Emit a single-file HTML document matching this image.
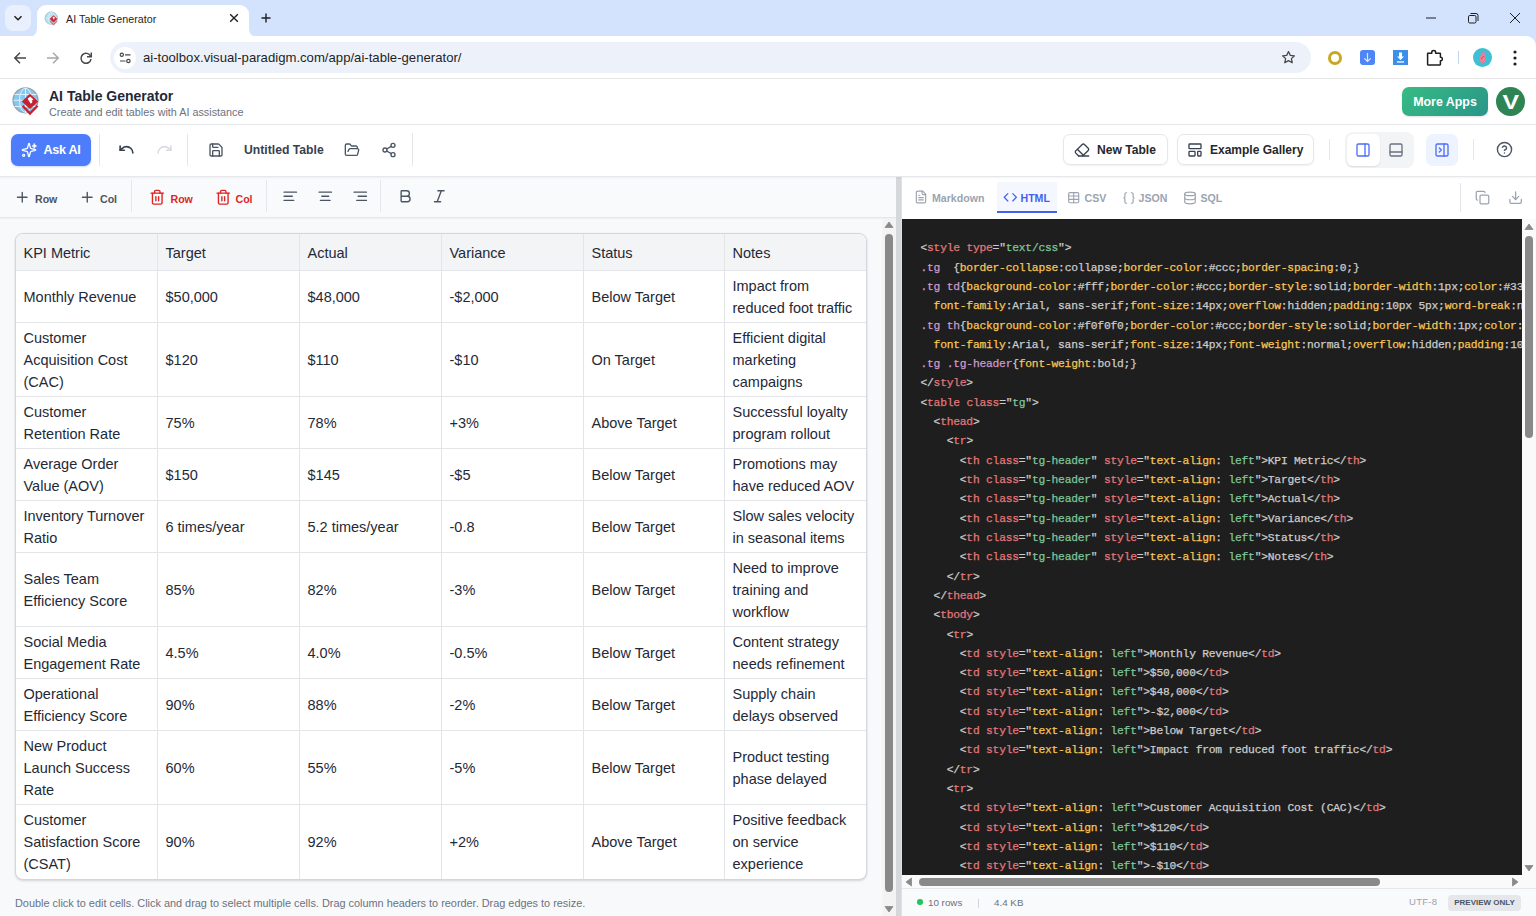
<!DOCTYPE html>
<html><head><meta charset="utf-8">
<style>
*{box-sizing:border-box;margin:0;padding:0}
html,body{width:1536px;height:916px;overflow:hidden;background:#fff;font-family:"Liberation Sans",sans-serif;color:#1f2937}
.abs{position:absolute;white-space:nowrap}
svg{display:block}
/* chrome */
#tabstrip{left:0;top:0;width:1536px;height:48px;background:#d3e3fd}
#addr{left:0;top:36px;width:1536px;height:42px;background:#fff;border-top-right-radius:10px}
#chromeline{left:0;top:78px;width:1536px;height:1.5px;background:#e6e6e6;box-shadow:0 0.5px 1px rgba(0,0,0,.04)}
/* app header */
#apphdr{left:0;top:79px;width:1536px;height:46px;background:#fff;border-bottom:1px solid #e5e7eb;box-shadow:0 1px 2px rgba(0,0,0,.05);z-index:2}
#toolbar{left:0;top:125px;width:1536px;height:52px;background:#fff;border-bottom:1px solid #e5e7eb;box-shadow:0 1px 2px rgba(0,0,0,.05);z-index:2}
#leftpane{left:0;top:177px;width:896px;height:739px;background:#f8f9fb}
#splitter{left:896px;top:177px;width:6px;height:739px;background:linear-gradient(90deg,#d6d7db 0,#d6d7db 4.5px,#e3e4e8 6px)}
#rightpane{left:902px;top:177px;width:634px;height:739px;background:#fff}
#code{left:902px;top:219px;width:620px;height:656px;background:#1e1e1e;overflow:hidden}

.tbt{top:16px;font-size:10.6px;font-weight:bold;line-height:13px}
#tbl{left:15px;top:56px;width:852px;height:647px;border:1px solid #d3d6dc;border-radius:8px;overflow:hidden;background:#fff;box-shadow:0 1px 3px rgba(0,0,0,.1),0 1px 2px rgba(0,0,0,.06)}
.tr{display:flex;border-bottom:1px solid #e3e5e9}
.th{background:#f3f4f6}
.td{border-right:1px solid #e3e5e9;display:flex;align-items:center;padding:0 0 0 7.5px;font-size:14.5px;line-height:22px;color:#1f2937;white-space:nowrap;flex:none}
.td span{position:relative;top:0.5px}
.last .td span{top:-0.3px}

.rtab{top:192px;font-size:10.6px;font-weight:bold;line-height:12px}
#code pre{font-family:"Liberation Mono",monospace;font-size:11.3px;letter-spacing:-0.23px;line-height:19.31px;color:#cccccc;padding:20.3px 0 0 18.5px;white-space:pre}
#code i{font-style:normal}
#code pre{-webkit-text-stroke:0.25px currentColor}
i.p{color:#cccccc} i.t,i.a{color:#e2777a} i.v{color:#7ec699} i.s{color:#cc99cd} i.r{color:#f8c555}
</style></head><body>

<div id="tabstrip" class="abs">
  <div class="abs" style="left:5px;top:5px;width:26px;height:26px;border-radius:8px;background:#e9effc"></div>
  <svg class="abs" style="left:13px;top:13px" width="10" height="10" viewBox="0 0 10 10"><path d="M1.5 3.2 L5 6.7 L8.5 3.2" fill="none" stroke="#1f1f1f" stroke-width="1.5"/></svg>
  <!-- active tab -->
  <div class="abs" style="left:37px;top:5px;width:212px;height:32px;background:#fff;border-radius:9px 9px 0 0"></div>
  <svg class="abs" style="left:28px;top:27px" width="10" height="10" viewBox="0 0 10 10"><path d="M0 10 Q9 10 9 1 L9 10 Z" fill="#fff"/><path d="M9 0 L10 0 L10 10 L9 10Z" fill="#fff"/></svg>
  <svg class="abs" style="left:248px;top:27px" width="10" height="10" viewBox="0 0 10 10"><path d="M10 10 Q1 10 1 1 L1 10 Z" fill="#fff"/><path d="M0 0 L1 0 L1 10 L0 10Z" fill="#fff"/></svg>
  <svg class="abs" style="left:40.5px;top:8.7px" width="20" height="20" viewBox="0 0 40 40">
    <circle cx="20.5" cy="18.3" r="12.4" fill="#b4e2f7" stroke="#9fb8c2" stroke-width="1.8"/>
    <g stroke="#e4f4fb" stroke-width="1" fill="none"><path d="M8.5 18.3 H32.5 M20.5 6 V30.6"/><ellipse cx="20.5" cy="18.3" rx="6" ry="12.2"/></g>
    <path d="M24.9 12.5 L32.6 19.8 L25 27 L17.4 19.8 Z" fill="#cc2430"/>
    <path d="M23 17 L25.2 15 L28 17.6 L26.4 19.2 L27.2 20 L25.6 21.6 Z" fill="#fff"/>
    <path d="M18.2 24 L25 31.2 L32 24" fill="none" stroke="#de6a72" stroke-width="2.6"/>
  </svg>
  <div class="abs" style="left:66px;top:12px;font-size:10.7px;line-height:14px;color:#1f1f1f;letter-spacing:0.05px">AI Table Generator</div>
  <svg class="abs" style="left:228px;top:12px" width="12" height="12" viewBox="0 0 12 12"><path d="M2.2 2.2 L9.8 9.8 M9.8 2.2 L2.2 9.8" stroke="#1f1f1f" stroke-width="1.4"/></svg>
  <svg class="abs" style="left:260px;top:12px" width="12" height="12" viewBox="0 0 12 12"><path d="M6 1.5 V10.5 M1.5 6 H10.5" stroke="#1f1f1f" stroke-width="1.4"/></svg>
  <!-- window controls -->
  <svg class="abs" style="left:1424px;top:12px" width="14" height="12" viewBox="0 0 14 12"><path d="M2 6 H12" stroke="#1f1f1f" stroke-width="1"/></svg>
  <svg class="abs" style="left:1466px;top:12px" width="14" height="12" viewBox="0 0 14 12"><rect x="2.5" y="3.5" width="7.5" height="7.5" rx="1.3" fill="none" stroke="#1f1f1f" stroke-width="1"/><path d="M4.5 1.5 H10 Q12 1.5 12 3.5 V9" fill="none" stroke="#1f1f1f" stroke-width="1"/></svg>
  <svg class="abs" style="left:1508px;top:12px" width="14" height="12" viewBox="0 0 14 12"><path d="M2 1 L12 11 M12 1 L2 11" stroke="#1f1f1f" stroke-width="1"/></svg>
</div>
<div id="addr" class="abs" style="border-radius:0 10px 0 0">
  <svg class="abs" style="left:13px;top:15px" width="14" height="14" viewBox="0 0 14 14"><path d="M13 7 H2 M7 1.8 L1.8 7 L7 12.2" fill="none" stroke="#474747" stroke-width="1.5"/></svg>
  <svg class="abs" style="left:46px;top:15px" width="14" height="14" viewBox="0 0 14 14"><path d="M1 7 H12 M7 1.8 L12.2 7 L7 12.2" fill="none" stroke="#a8a8a8" stroke-width="1.5"/></svg>
  <svg class="abs" style="left:79px;top:15px" width="14" height="14" viewBox="0 0 14 14"><path d="M11.6 5.2 A5 5 0 1 0 12 8" fill="none" stroke="#474747" stroke-width="1.5"/><path d="M12.3 1.5 V5.8 H8" fill="none" stroke="#474747" stroke-width="1.5"/></svg>
  <div class="abs" style="left:110px;top:6px;width:1201px;height:31px;border-radius:16px;background:#edf2fa"></div>
  <div class="abs" style="left:114px;top:11px;width:22px;height:22px;border-radius:11px;background:#fff"></div>
  <svg class="abs" style="left:119px;top:16px" width="13" height="12" viewBox="0 0 13 12"><circle cx="2.8" cy="2.8" r="1.6" fill="none" stroke="#474747" stroke-width="1.2"/><path d="M6 2.8 H11.5 M1 9 H6.5" stroke="#474747" stroke-width="1.2"/><circle cx="9.4" cy="9" r="1.7" fill="none" stroke="#474747" stroke-width="1.2"/></svg>
  <div class="abs" style="left:143px;top:13.5px;font-size:13.15px;line-height:16px;color:#1f1f1f">ai-toolbox.visual-paradigm.com/app/ai-table-generator/</div>
  <svg class="abs" style="left:1281px;top:14px" width="15" height="15" viewBox="0 0 24 24"><path d="M12 2.5 L14.9 8.6 L21.5 9.3 L16.6 13.8 L18 20.4 L12 17 L6 20.4 L7.4 13.8 L2.5 9.3 L9.1 8.6 Z" fill="none" stroke="#474747" stroke-width="2" stroke-linejoin="round"/></svg>
  <div class="abs" style="left:1328px;top:15px;width:14px;height:14px;border-radius:7px;border:3.2px solid #c9a720"></div>
  <div class="abs" style="left:1360px;top:14px;width:15px;height:15px;border-radius:3px;background:#4f86f7"></div>
  <svg class="abs" style="left:1360px;top:14px" width="15" height="15" viewBox="0 0 15 15"><path d="M7.5 3 V11.5 M4.3 8.3 L7.5 11.5 L10.7 8.3" fill="none" stroke="#dbe6fd" stroke-width="1.2"/></svg>
  <div class="abs" style="left:1393px;top:14px;width:15px;height:15px;background:#3b8eea"></div>
  <svg class="abs" style="left:1393px;top:14px" width="15" height="15" viewBox="0 0 15 15"><path d="M6 2.5 H9 V6.5 H11 L7.5 10 L4 6.5 H6 Z" fill="#fff"/><rect x="4" y="11.3" width="7" height="1.3" fill="#fff"/></svg>
  <svg class="abs" style="left:1426px;top:13px" width="17" height="17" viewBox="0 0 17 17"><path d="M1.6 4.2 H5.8 V3.2 Q5.8 1.6 7.7 1.6 Q9.6 1.6 9.6 3.2 V4.2 H14 Q14.4 4.2 14.4 4.6 V8.2 H15 Q16.3 8.2 16.3 10 Q16.3 11.8 15 11.8 H14.4 V15.6 Q14.4 16 14 16 H2 Q1.6 16 1.6 15.6 Z" fill="none" stroke="#1f1f1f" stroke-width="1.5" stroke-linejoin="round"/></svg>
  <div class="abs" style="left:1458px;top:15px;width:1px;height:13px;background:#c2d3f0"></div>
  <div class="abs" style="left:1473px;top:12px;width:19px;height:19px;border-radius:10px;background:#3fbfd3"></div>
  <svg class="abs" style="left:1476px;top:14px" width="13" height="15" viewBox="0 0 13 15"><path d="M7 2 Q9 1 8.5 4 Q10 5 9 7 L10 11 Q9 13 6 13 Q3 12 4 9 Q3 7 5 5 Q5 3 7 2Z" fill="#ef7d95"/><path d="M5 9 L8 6" stroke="#c4405c" stroke-width="0.8"/></svg>
  <svg class="abs" style="left:1512px;top:14px" width="6" height="16" viewBox="0 0 6 16"><circle cx="3" cy="2" r="1.6" fill="#1f1f1f"/><circle cx="3" cy="8" r="1.6" fill="#1f1f1f"/><circle cx="3" cy="14" r="1.6" fill="#1f1f1f"/></svg>
</div>
<div id="chromeline" class="abs"></div>

<div id="apphdr" class="abs">
  <svg class="abs" style="left:5px;top:3px" width="40" height="40" viewBox="0 0 40 40">
    <circle cx="20.5" cy="18.3" r="12.4" fill="#86c8f0" stroke="#8ea4ae" stroke-width="1.4"/>
    <g stroke="#e8f4fb" stroke-width="0.9" fill="none">
      <path d="M8.5 18.3 H32.5 M9.5 12.5 H31.5 M9.5 24.5 H31.5 M20.5 6 V30.6"/>
      <ellipse cx="20.5" cy="18.3" rx="6" ry="12.2"/>
    </g>
    <path d="M24.9 11.8 L33.2 19.6 L25 27 L16.8 19.6 Z" fill="#c8202f"/>
    <path d="M22.6 16.8 L25.2 14.4 L28.4 17.4 L26.6 19.1 L27.6 20.1 L25.8 21.8 Z" fill="#fff"/>
    <path d="M17.6 23.8 L25 31.6 L32.6 23.8" fill="none" stroke="#c8202f" stroke-width="2.3"/>
  </svg>
  <div class="abs" style="left:49px;top:9px;font-size:14px;font-weight:bold;line-height:16px;color:#1f2937">AI Table Generator</div>
  <div class="abs" style="left:49px;top:27px;font-size:10.8px;line-height:13px;color:#6b7280">Create and edit tables with AI assistance</div>
  <div class="abs" style="left:1402px;top:8px;width:86px;height:29px;border-radius:7px;background:linear-gradient(135deg,#37bb83,#2a9589);box-shadow:0 1px 2px rgba(0,0,0,.12)"></div>
  <div class="abs" style="left:1402px;top:16px;width:86px;text-align:center;font-size:12.4px;font-weight:bold;line-height:15px;color:#fff">More Apps</div>
  <div class="abs" style="left:1495.5px;top:7.7px;width:29.5px;height:29.5px;border-radius:50%;background:#2e8553"></div>
  <div class="abs" style="left:1495.5px;top:12px;width:29.5px;text-align:center;font-size:21px;font-weight:bold;line-height:21px;color:#fff;transform:scaleX(1.18)">V</div>
</div>
<div id="toolbar" class="abs">
  <div class="abs" style="left:11px;top:9px;width:80px;height:32px;border-radius:7px;background:#4d7dfb;box-shadow:0 1px 2px rgba(77,125,251,.3)"></div>
  <svg class="abs" style="left:21px;top:17px" width="16" height="16" viewBox="0 0 24 24" fill="none" stroke="#fff" stroke-width="2" stroke-linecap="round" stroke-linejoin="round"><path d="M9.937 15.5A2 2 0 0 0 8.5 14.063l-6.135-1.582a.5.5 0 0 1 0-.962L8.5 9.936A2 2 0 0 0 9.937 8.5l1.582-6.135a.5.5 0 0 1 .963 0L14.063 8.5A2 2 0 0 0 15.5 9.937l6.135 1.581a.5.5 0 0 1 0 .964L15.5 14.063a2 2 0 0 0-1.437 1.437l-1.582 6.135a.5.5 0 0 1-.963 0z"/><path d="M20 2.5 21.2 4.8 23.5 6 21.2 7.2 20 9.5 18.8 7.2 16.5 6 18.8 4.8Z" fill="#fff" stroke-width="1"/><circle cx="4" cy="20" r="1.6" stroke-width="1.8"/></svg>
  <div class="abs" style="left:43.5px;top:17.5px;font-size:12.6px;font-weight:bold;line-height:15px;color:#fff;letter-spacing:-0.3px">Ask AI</div>
  <div class="abs" style="left:99px;top:9px;width:1px;height:32px;background:#e5e7eb"></div>
  <svg class="abs" style="left:118.3px;top:16px" width="17" height="17" viewBox="0 0 24 24" fill="none" stroke="#374151" stroke-width="2.3" stroke-linecap="round" stroke-linejoin="round"><path d="M3 7v6h6"/><path d="M21 17a9 9 0 0 0-9-9 9 9 0 0 0-6 2.3L3 13"/></svg>
  <svg class="abs" style="left:155.5px;top:16px" width="17" height="17" viewBox="0 0 24 24" fill="none" stroke="#d8dbe0" stroke-width="2.3" stroke-linecap="round" stroke-linejoin="round"><path d="M21 7v6h-6"/><path d="M3 17a9 9 0 0 1 9-9 9 9 0 0 1 6 2.3l3 2.7"/></svg>
  <div class="abs" style="left:187px;top:9px;width:1px;height:32px;background:#e5e7eb"></div>
  <svg class="abs" style="left:207.5px;top:17px" width="16" height="16" viewBox="0 0 24 24" fill="none" stroke="#4b5563" stroke-width="2" stroke-linecap="round" stroke-linejoin="round"><path d="M15.2 3a2 2 0 0 1 1.4.6l3.8 3.8a2 2 0 0 1 .6 1.4V19a2 2 0 0 1-2 2H5a2 2 0 0 1-2-2V5a2 2 0 0 1 2-2z"/><path d="M17 21v-7a1 1 0 0 0-1-1H8a1 1 0 0 0-1 1v7"/><path d="M7 3v4a1 1 0 0 0 1 1h7"/></svg>
  <div class="abs" style="left:244px;top:18px;font-size:12.2px;font-weight:bold;line-height:14px;color:#374151">Untitled Table</div>
  <svg class="abs" style="left:343.5px;top:17px" width="16" height="16" viewBox="0 0 24 24" fill="none" stroke="#4b5563" stroke-width="2" stroke-linecap="round" stroke-linejoin="round"><path d="m6 14 1.5-2.9A2 2 0 0 1 9.24 10H20a2 2 0 0 1 1.94 2.5l-1.54 6a2 2 0 0 1-1.95 1.5H4a2 2 0 0 1-2-2V5a2 2 0 0 1 2-2h3.9a2 2 0 0 1 1.69.9l.81 1.2a2 2 0 0 0 1.67.9H18a2 2 0 0 1 2 2v2"/></svg>
  <svg class="abs" style="left:380.5px;top:17px" width="16" height="16" viewBox="0 0 24 24" fill="none" stroke="#4b5563" stroke-width="2" stroke-linecap="round" stroke-linejoin="round"><circle cx="18" cy="5" r="3"/><circle cx="6" cy="12" r="3"/><circle cx="18" cy="19" r="3"/><path d="m8.59 13.51 6.83 3.98M15.41 6.51l-6.82 3.98"/></svg>
  <div class="abs" style="left:412px;top:8px;width:1px;height:33px;background:#e5e7eb"></div>

  <div class="abs" style="left:1063px;top:9px;width:105px;height:31px;border-radius:7px;background:#fff;border:1px solid #e5e7eb;box-shadow:0 1px 2px rgba(0,0,0,.06)"></div>
  <svg class="abs" style="left:1073.5px;top:16.5px" width="16" height="16" viewBox="0 0 24 24" fill="none" stroke="#374151" stroke-width="2" stroke-linecap="round" stroke-linejoin="round"><path d="m7 21-4.3-4.3c-1-1-1-2.5 0-3.4l9.6-9.6c1-1 2.5-1 3.4 0l5.6 5.6c1 1 1 2.5 0 3.4L13 21"/><path d="M22 21H7"/><path d="m5 11 9 9"/></svg>
  <div class="abs" style="left:1097px;top:18px;font-size:12.1px;font-weight:bold;line-height:14px;color:#27272a">New Table</div>
  <div class="abs" style="left:1177px;top:9px;width:137px;height:31px;border-radius:7px;background:#fff;border:1px solid #e5e7eb;box-shadow:0 1px 2px rgba(0,0,0,.06)"></div>
  <svg class="abs" style="left:1186.5px;top:16.5px" width="16" height="16" viewBox="0 0 24 24" fill="none" stroke="#374151" stroke-width="2" stroke-linecap="round" stroke-linejoin="round"><rect width="18" height="7" x="3" y="3" rx="1"/><rect width="9" height="7" x="3" y="14" rx="1"/><rect width="5" height="7" x="16" y="14" rx="1"/></svg>
  <div class="abs" style="left:1210px;top:18px;font-size:12px;font-weight:bold;line-height:14px;color:#27272a">Example Gallery</div>
  <div class="abs" style="left:1329px;top:14px;width:1px;height:21px;background:#e5e7eb"></div>
  <div class="abs" style="left:1345px;top:6.5px;width:69px;height:36px;border-radius:8px;background:#f3f4f6"></div>
  <div class="abs" style="left:1347px;top:8.5px;width:33px;height:32.5px;border-radius:6px;background:#fff;box-shadow:0 1px 2px rgba(0,0,0,.1)"></div>
  <svg class="abs" style="left:1355px;top:16.5px" width="16" height="16" viewBox="0 0 24 24" fill="none" stroke="#4f6ef7" stroke-width="2" stroke-linecap="round" stroke-linejoin="round"><rect width="18" height="18" x="3" y="3" rx="2"/><path d="M15 3v18"/></svg>
  <svg class="abs" style="left:1388px;top:16.5px" width="16" height="16" viewBox="0 0 24 24" fill="none" stroke="#6b7280" stroke-width="2" stroke-linecap="round" stroke-linejoin="round"><rect width="18" height="18" x="3" y="3" rx="2"/><path d="M3 15h18"/></svg>
  <div class="abs" style="left:1425.5px;top:8.5px;width:32.5px;height:32.5px;border-radius:7px;background:#eef4ff"></div>
  <svg class="abs" style="left:1434px;top:16.5px" width="16" height="16" viewBox="0 0 24 24" fill="none" stroke="#4f6ef7" stroke-width="2" stroke-linecap="round" stroke-linejoin="round"><rect width="18" height="18" x="3" y="3" rx="2"/><path d="M15 3v18"/><path d="m8 9 3 3-3 3"/></svg>
  <div class="abs" style="left:1473px;top:14px;width:1px;height:21px;background:#e5e7eb"></div>
  <svg class="abs" style="left:1496px;top:16px" width="17" height="17" viewBox="0 0 24 24" fill="none" stroke="#4b5563" stroke-width="2" stroke-linecap="round" stroke-linejoin="round"><circle cx="12" cy="12" r="10"/><path d="M9.09 9a3 3 0 0 1 5.83 1c0 2-3 3-3 3"/><path d="M12 17h.01"/></svg>
</div>

<div id="leftpane" class="abs">
  <div class="abs" style="left:0;top:0;width:896px;height:41px;background:#f9fafb;border-bottom:1px solid #e5e7eb;box-shadow:0 1px 1px rgba(0,0,0,.03)"></div>
  <svg class="abs" style="left:13.5px;top:11.5px" width="16.5" height="16.5" viewBox="0 0 24 24" fill="none" stroke-width="2" stroke-linecap="round" stroke-linejoin="round" stroke="#4b5563"><path d="M5 12h14M12 5v14"/></svg>
  <div class="abs tbt" style="left:35px;color:#4b5563">Row</div>
  <svg class="abs" style="left:78.5px;top:11.5px" width="16.5" height="16.5" viewBox="0 0 24 24" fill="none" stroke-width="2" stroke-linecap="round" stroke-linejoin="round" stroke="#4b5563"><path d="M5 12h14M12 5v14"/></svg>
  <div class="abs tbt" style="left:100px;color:#4b5563">Col</div>
  <div class="abs" style="left:131px;top:3px;width:1px;height:32px;background:#e5e7eb"></div>
  <svg class="abs" style="left:149px;top:11.5px" width="16.5" height="16.5" viewBox="0 0 24 24" fill="none" stroke-width="2" stroke-linecap="round" stroke-linejoin="round" stroke="#dc2626"><path d="M3 6h18"/><path d="M19 6v14c0 1-1 2-2 2H7c-1 0-2-1-2-2V6"/><path d="M8 6V4c0-1 1-2 2-2h4c1 0 2 1 2 2v2"/><path d="M10 11v6M14 11v6"/></svg>
  <div class="abs tbt" style="left:170.5px;color:#dc2626">Row</div>
  <svg class="abs" style="left:215px;top:11.5px" width="16.5" height="16.5" viewBox="0 0 24 24" fill="none" stroke-width="2" stroke-linecap="round" stroke-linejoin="round" stroke="#dc2626"><path d="M3 6h18"/><path d="M19 6v14c0 1-1 2-2 2H7c-1 0-2-1-2-2V6"/><path d="M8 6V4c0-1 1-2 2-2h4c1 0 2 1 2 2v2"/><path d="M10 11v6M14 11v6"/></svg>
  <div class="abs tbt" style="left:235.5px;color:#dc2626">Col</div>
  <div class="abs" style="left:266px;top:3px;width:1px;height:32px;background:#e5e7eb"></div>
  <svg class="abs" style="left:282.3px;top:10.5px" width="16.5" height="16.5" viewBox="0 0 24 24" fill="none" stroke-width="2" stroke-linecap="round" stroke-linejoin="round" stroke="#4b5563"><path d="M15 12H3M17 18H3M21 6H3"/></svg>
  <svg class="abs" style="left:317.4px;top:10.5px" width="16.5" height="16.5" viewBox="0 0 24 24" fill="none" stroke-width="2" stroke-linecap="round" stroke-linejoin="round" stroke="#4b5563"><path d="M17 12H7M19 18H5M21 6H3"/></svg>
  <svg class="abs" style="left:351.9px;top:10.5px" width="16.5" height="16.5" viewBox="0 0 24 24" fill="none" stroke-width="2" stroke-linecap="round" stroke-linejoin="round" stroke="#4b5563"><path d="M21 12H9M21 18H7M21 6H3"/></svg>
  <div class="abs" style="left:380px;top:3px;width:1px;height:32px;background:#e5e7eb"></div>
  <svg class="abs" style="left:396.5px;top:11px" width="16.5" height="16.5" viewBox="0 0 24 24" fill="none" stroke-width="2" stroke-linecap="round" stroke-linejoin="round" stroke="#4b5563"><path d="M6 12h9a4 4 0 0 1 0 8H7a1 1 0 0 1-1-1V5a1 1 0 0 1 1-1h7a4 4 0 0 1 0 8"/></svg>
  <svg class="abs" style="left:431px;top:11px" width="16.5" height="16.5" viewBox="0 0 24 24" fill="none" stroke-width="2" stroke-linecap="round" stroke-linejoin="round" stroke="#4b5563"><path d="M19 4h-9M14 20H5M15 4 9 20"/></svg>

  <div id="tbl" class="abs">
<div class="tr th" style="height:37px"><div class="td" style="width:142px"><span>KPI Metric</span></div><div class="td" style="width:142px"><span>Target</span></div><div class="td" style="width:142px"><span>Actual</span></div><div class="td" style="width:142px"><span>Variance</span></div><div class="td" style="width:141px"><span>Status</span></div><div class="td" style="width:141px;border-right:0"><span>Notes</span></div></div>
<div class="tr " style="height:52px"><div class="td" style="width:142px"><span>Monthly Revenue</span></div><div class="td" style="width:142px"><span>$50,000</span></div><div class="td" style="width:142px"><span>$48,000</span></div><div class="td" style="width:142px"><span>-$2,000</span></div><div class="td" style="width:141px"><span>Below Target</span></div><div class="td" style="width:141px;border-right:0"><span>Impact from<br>reduced foot traffic</span></div></div>
<div class="tr " style="height:74px"><div class="td" style="width:142px"><span>Customer<br>Acquisition Cost<br>(CAC)</span></div><div class="td" style="width:142px"><span>$120</span></div><div class="td" style="width:142px"><span>$110</span></div><div class="td" style="width:142px"><span>-$10</span></div><div class="td" style="width:141px"><span>On Target</span></div><div class="td" style="width:141px;border-right:0"><span>Efficient digital<br>marketing<br>campaigns</span></div></div>
<div class="tr " style="height:52px"><div class="td" style="width:142px"><span>Customer<br>Retention Rate</span></div><div class="td" style="width:142px"><span>75%</span></div><div class="td" style="width:142px"><span>78%</span></div><div class="td" style="width:142px"><span>+3%</span></div><div class="td" style="width:141px"><span>Above Target</span></div><div class="td" style="width:141px;border-right:0"><span>Successful loyalty<br>program rollout</span></div></div>
<div class="tr " style="height:52px"><div class="td" style="width:142px"><span>Average Order<br>Value (AOV)</span></div><div class="td" style="width:142px"><span>$150</span></div><div class="td" style="width:142px"><span>$145</span></div><div class="td" style="width:142px"><span>-$5</span></div><div class="td" style="width:141px"><span>Below Target</span></div><div class="td" style="width:141px;border-right:0"><span>Promotions may<br>have reduced AOV</span></div></div>
<div class="tr " style="height:52px"><div class="td" style="width:142px"><span>Inventory Turnover<br>Ratio</span></div><div class="td" style="width:142px"><span>6 times/year</span></div><div class="td" style="width:142px"><span>5.2 times/year</span></div><div class="td" style="width:142px"><span>-0.8</span></div><div class="td" style="width:141px"><span>Below Target</span></div><div class="td" style="width:141px;border-right:0"><span>Slow sales velocity<br>in seasonal items</span></div></div>
<div class="tr " style="height:74px"><div class="td" style="width:142px"><span>Sales Team<br>Efficiency Score</span></div><div class="td" style="width:142px"><span>85%</span></div><div class="td" style="width:142px"><span>82%</span></div><div class="td" style="width:142px"><span>-3%</span></div><div class="td" style="width:141px"><span>Below Target</span></div><div class="td" style="width:141px;border-right:0"><span>Need to improve<br>training and<br>workflow</span></div></div>
<div class="tr " style="height:52px"><div class="td" style="width:142px"><span>Social Media<br>Engagement Rate</span></div><div class="td" style="width:142px"><span>4.5%</span></div><div class="td" style="width:142px"><span>4.0%</span></div><div class="td" style="width:142px"><span>-0.5%</span></div><div class="td" style="width:141px"><span>Below Target</span></div><div class="td" style="width:141px;border-right:0"><span>Content strategy<br>needs refinement</span></div></div>
<div class="tr " style="height:52px"><div class="td" style="width:142px"><span>Operational<br>Efficiency Score</span></div><div class="td" style="width:142px"><span>90%</span></div><div class="td" style="width:142px"><span>88%</span></div><div class="td" style="width:142px"><span>-2%</span></div><div class="td" style="width:141px"><span>Below Target</span></div><div class="td" style="width:141px;border-right:0"><span>Supply chain<br>delays observed</span></div></div>
<div class="tr " style="height:74px"><div class="td" style="width:142px"><span>New Product<br>Launch Success<br>Rate</span></div><div class="td" style="width:142px"><span>60%</span></div><div class="td" style="width:142px"><span>55%</span></div><div class="td" style="width:142px"><span>-5%</span></div><div class="td" style="width:141px"><span>Below Target</span></div><div class="td" style="width:141px;border-right:0"><span>Product testing<br>phase delayed</span></div></div>
<div class="tr last" style="height:74px;border-bottom:0"><div class="td" style="width:142px"><span>Customer<br>Satisfaction Score<br>(CSAT)</span></div><div class="td" style="width:142px"><span>90%</span></div><div class="td" style="width:142px"><span>92%</span></div><div class="td" style="width:142px"><span>+2%</span></div><div class="td" style="width:141px"><span>Above Target</span></div><div class="td" style="width:141px;border-right:0"><span>Positive feedback<br>on service<br>experience</span></div></div>
  </div>
  <div class="abs" style="left:15px;top:720px;font-size:10.9px;line-height:13px;color:#6b7280">Double click to edit cells. Click and drag to select multiple cells. Drag column headers to reorder. Drag edges to resize.</div>
  <!-- scrollbar -->
  <div class="abs" style="left:881px;top:42px;width:15px;height:697px;background:linear-gradient(90deg,rgba(244,244,245,0),#f3f3f4 3px)"></div>
  <svg class="abs" style="left:884px;top:44px" width="10" height="8" viewBox="0 0 10 8"><path d="M1 6.5 L5 1 L9 6.5Z" fill="#898989" stroke="#898989" stroke-width="0.8" stroke-linejoin="round"/></svg>
  <div class="abs" style="left:885px;top:57px;width:8px;height:658px;border-radius:4px;background:#898989"></div>
  <svg class="abs" style="left:884px;top:728px" width="10" height="8" viewBox="0 0 10 8"><path d="M1 1.5 L5 7 L9 1.5Z" fill="#898989" stroke="#898989" stroke-width="0.8" stroke-linejoin="round"/></svg>
</div>
<div id="splitter" class="abs"></div>

<div id="rightpane" class="abs"></div>
<div class="abs" style="left:0;top:0;width:0;height:0">
  <svg class="abs" style="left:914.3px;top:190.2px" width="14" height="14" viewBox="0 0 24 24" fill="none" stroke-width="2" stroke-linecap="round" stroke-linejoin="round" stroke="#9ca3af"><path d="M15 2H6a2 2 0 0 0-2 2v16a2 2 0 0 0 2 2h12a2 2 0 0 0 2-2V7Z"/><path d="M14 2v4a2 2 0 0 0 2 2h4"/><path d="M10 9H8M16 13H8M16 17H8"/></svg>
  <div class="abs rtab" style="left:932px;color:#9ca3af">Markdown</div>
  <div class="abs" style="left:996.5px;top:182px;width:60.5px;height:31px;background:#f5f7ff"></div>
  <div class="abs" style="left:996.5px;top:211px;width:60.5px;height:2px;background:#4361ee"></div>
  <svg class="abs" style="left:1003px;top:190.4px" width="14.6" height="14.6" viewBox="0 0 24 24" fill="none" stroke-width="2" stroke-linecap="round" stroke-linejoin="round" stroke="#4361ee" stroke-width="2.6"><path d="m16 18 6-6-6-6"/><path d="m8 6-6 6 6 6"/></svg>
  <div class="abs rtab" style="left:1020.5px;color:#4361ee">HTML</div>
  <svg class="abs" style="left:1066.8px;top:190.8px" width="13.4" height="13.4" viewBox="0 0 24 24" fill="none" stroke-width="2" stroke-linecap="round" stroke-linejoin="round" stroke="#9ca3af"><rect x="3" y="3" width="18" height="18" rx="2"/><path d="M3 9h18M3 15h18M12 3v18"/></svg>
  <div class="abs rtab" style="left:1084.5px;color:#9ca3af">CSV</div>
  <svg class="abs" style="left:1121.8px;top:190.5px" width="14" height="14" viewBox="0 0 24 24" fill="none" stroke-width="2" stroke-linecap="round" stroke-linejoin="round" stroke="#9ca3af"><path d="M8 3H7a2 2 0 0 0-2 2v5a2 2 0 0 1-2 2 2 2 0 0 1 2 2v5c0 1.1.9 2 2 2h1"/><path d="M16 21h1a2 2 0 0 0 2-2v-5c0-1.1.9-2 2-2a2 2 0 0 1-2-2V5a2 2 0 0 0-2-2h-1"/></svg>
  <div class="abs rtab" style="left:1138.5px;color:#9ca3af">JSON</div>
  <svg class="abs" style="left:1183.3px;top:190.5px" width="14" height="14" viewBox="0 0 24 24" fill="none" stroke-width="2" stroke-linecap="round" stroke-linejoin="round" stroke="#9ca3af"><ellipse cx="12" cy="5" rx="9" ry="3"/><path d="M3 5V19A9 3 0 0 0 21 19V5"/><path d="M3 12A9 3 0 0 0 21 12"/></svg>
  <div class="abs rtab" style="left:1200.5px;color:#9ca3af">SQL</div>
  <div class="abs" style="left:1460px;top:183px;width:1px;height:29px;background:#e5e7eb"></div>
  <svg class="abs" style="left:1475.3px;top:190.2px" width="15" height="15" viewBox="0 0 24 24" fill="none" stroke-width="2" stroke-linecap="round" stroke-linejoin="round" stroke="#9ca3af"><rect width="14" height="14" x="8" y="8" rx="2"/><path d="M4 16c-1.1 0-2-.9-2-2V4c0-1.1.9-2 2-2h10c1.1 0 2 .9 2 2"/></svg>
  <svg class="abs" style="left:1508px;top:189.8px" width="15.2" height="15.2" viewBox="0 0 24 24" fill="none" stroke-width="2" stroke-linecap="round" stroke-linejoin="round" stroke="#9ca3af"><path d="M21 15v4a2 2 0 0 1-2 2H5a2 2 0 0 1-2-2v-4"/><path d="m7 10 5 5 5-5"/><path d="M12 15V3"/></svg>

  <div id="code" class="abs"><pre><i class="p">&lt;</i><i class="t">style</i> <i class="a">type</i><i class="p">=</i><i class="p">"</i><i class="v">text/css</i><i class="p">"</i><i class="p">&gt;</i>
<i class="s">.tg  </i><i class="p">{</i><i class="r">border-collapse</i><i class="p">:</i>collapse<i class="p">;</i><i class="r">border-color</i><i class="p">:</i>#ccc<i class="p">;</i><i class="r">border-spacing</i><i class="p">:</i>0<i class="p">;</i><i class="p">}</i>
<i class="s">.tg td</i><i class="p">{</i><i class="r">background-color</i><i class="p">:</i>#fff<i class="p">;</i><i class="r">border-color</i><i class="p">:</i>#ccc<i class="p">;</i><i class="r">border-style</i><i class="p">:</i>solid<i class="p">;</i><i class="r">border-width</i><i class="p">:</i>1px<i class="p">;</i><i class="r">color</i><i class="p">:</i>#333<i class="p">;</i>
  <i class="r">font-family</i><i class="p">:</i>Arial, sans-serif<i class="p">;</i><i class="r">font-size</i><i class="p">:</i>14px<i class="p">;</i><i class="r">overflow</i><i class="p">:</i>hidden<i class="p">;</i><i class="r">padding</i><i class="p">:</i>10px 5px<i class="p">;</i><i class="r">word-break</i><i class="p">:</i>normal<i class="p">;</i><i class="p">}</i>
<i class="s">.tg th</i><i class="p">{</i><i class="r">background-color</i><i class="p">:</i>#f0f0f0<i class="p">;</i><i class="r">border-color</i><i class="p">:</i>#ccc<i class="p">;</i><i class="r">border-style</i><i class="p">:</i>solid<i class="p">;</i><i class="r">border-width</i><i class="p">:</i>1px<i class="p">;</i><i class="r">color</i><i class="p">:</i>#333<i class="p">;</i>
  <i class="r">font-family</i><i class="p">:</i>Arial, sans-serif<i class="p">;</i><i class="r">font-size</i><i class="p">:</i>14px<i class="p">;</i><i class="r">font-weight</i><i class="p">:</i>normal<i class="p">;</i><i class="r">overflow</i><i class="p">:</i>hidden<i class="p">;</i><i class="r">padding</i><i class="p">:</i>10px 5px<i class="p">;</i><i class="r">word-break</i><i class="p">:</i>normal<i class="p">;</i><i class="p">}</i>
<i class="s">.tg .tg-header</i><i class="p">{</i><i class="r">font-weight</i><i class="p">:</i>bold<i class="p">;</i><i class="p">}</i>
<i class="p">&lt;/</i><i class="t">style</i><i class="p">&gt;</i>
<i class="p">&lt;</i><i class="t">table</i> <i class="a">class</i><i class="p">=</i><i class="p">"</i><i class="v">tg</i><i class="p">"</i><i class="p">&gt;</i>
  <i class="p">&lt;</i><i class="t">thead</i><i class="p">&gt;</i>
    <i class="p">&lt;</i><i class="t">tr</i><i class="p">&gt;</i>
      <i class="p">&lt;</i><i class="t">th</i> <i class="a">class</i><i class="p">=</i><i class="p">"</i><i class="v">tg-header</i><i class="p">"</i> <i class="a">style</i><i class="p">=</i><i class="p">"</i><i class="r">text-align</i><i class="p">:</i><i class="v"> left</i><i class="p">"</i><i class="p">&gt;</i>KPI Metric<i class="p">&lt;/</i><i class="t">th</i><i class="p">&gt;</i>
      <i class="p">&lt;</i><i class="t">th</i> <i class="a">class</i><i class="p">=</i><i class="p">"</i><i class="v">tg-header</i><i class="p">"</i> <i class="a">style</i><i class="p">=</i><i class="p">"</i><i class="r">text-align</i><i class="p">:</i><i class="v"> left</i><i class="p">"</i><i class="p">&gt;</i>Target<i class="p">&lt;/</i><i class="t">th</i><i class="p">&gt;</i>
      <i class="p">&lt;</i><i class="t">th</i> <i class="a">class</i><i class="p">=</i><i class="p">"</i><i class="v">tg-header</i><i class="p">"</i> <i class="a">style</i><i class="p">=</i><i class="p">"</i><i class="r">text-align</i><i class="p">:</i><i class="v"> left</i><i class="p">"</i><i class="p">&gt;</i>Actual<i class="p">&lt;/</i><i class="t">th</i><i class="p">&gt;</i>
      <i class="p">&lt;</i><i class="t">th</i> <i class="a">class</i><i class="p">=</i><i class="p">"</i><i class="v">tg-header</i><i class="p">"</i> <i class="a">style</i><i class="p">=</i><i class="p">"</i><i class="r">text-align</i><i class="p">:</i><i class="v"> left</i><i class="p">"</i><i class="p">&gt;</i>Variance<i class="p">&lt;/</i><i class="t">th</i><i class="p">&gt;</i>
      <i class="p">&lt;</i><i class="t">th</i> <i class="a">class</i><i class="p">=</i><i class="p">"</i><i class="v">tg-header</i><i class="p">"</i> <i class="a">style</i><i class="p">=</i><i class="p">"</i><i class="r">text-align</i><i class="p">:</i><i class="v"> left</i><i class="p">"</i><i class="p">&gt;</i>Status<i class="p">&lt;/</i><i class="t">th</i><i class="p">&gt;</i>
      <i class="p">&lt;</i><i class="t">th</i> <i class="a">class</i><i class="p">=</i><i class="p">"</i><i class="v">tg-header</i><i class="p">"</i> <i class="a">style</i><i class="p">=</i><i class="p">"</i><i class="r">text-align</i><i class="p">:</i><i class="v"> left</i><i class="p">"</i><i class="p">&gt;</i>Notes<i class="p">&lt;/</i><i class="t">th</i><i class="p">&gt;</i>
    <i class="p">&lt;/</i><i class="t">tr</i><i class="p">&gt;</i>
  <i class="p">&lt;/</i><i class="t">thead</i><i class="p">&gt;</i>
  <i class="p">&lt;</i><i class="t">tbody</i><i class="p">&gt;</i>
    <i class="p">&lt;</i><i class="t">tr</i><i class="p">&gt;</i>
      <i class="p">&lt;</i><i class="t">td</i> <i class="a">style</i><i class="p">=</i><i class="p">"</i><i class="r">text-align</i><i class="p">:</i><i class="v"> left</i><i class="p">"</i><i class="p">&gt;</i>Monthly Revenue<i class="p">&lt;/</i><i class="t">td</i><i class="p">&gt;</i>
      <i class="p">&lt;</i><i class="t">td</i> <i class="a">style</i><i class="p">=</i><i class="p">"</i><i class="r">text-align</i><i class="p">:</i><i class="v"> left</i><i class="p">"</i><i class="p">&gt;</i>$50,000<i class="p">&lt;/</i><i class="t">td</i><i class="p">&gt;</i>
      <i class="p">&lt;</i><i class="t">td</i> <i class="a">style</i><i class="p">=</i><i class="p">"</i><i class="r">text-align</i><i class="p">:</i><i class="v"> left</i><i class="p">"</i><i class="p">&gt;</i>$48,000<i class="p">&lt;/</i><i class="t">td</i><i class="p">&gt;</i>
      <i class="p">&lt;</i><i class="t">td</i> <i class="a">style</i><i class="p">=</i><i class="p">"</i><i class="r">text-align</i><i class="p">:</i><i class="v"> left</i><i class="p">"</i><i class="p">&gt;</i>-$2,000<i class="p">&lt;/</i><i class="t">td</i><i class="p">&gt;</i>
      <i class="p">&lt;</i><i class="t">td</i> <i class="a">style</i><i class="p">=</i><i class="p">"</i><i class="r">text-align</i><i class="p">:</i><i class="v"> left</i><i class="p">"</i><i class="p">&gt;</i>Below Target<i class="p">&lt;/</i><i class="t">td</i><i class="p">&gt;</i>
      <i class="p">&lt;</i><i class="t">td</i> <i class="a">style</i><i class="p">=</i><i class="p">"</i><i class="r">text-align</i><i class="p">:</i><i class="v"> left</i><i class="p">"</i><i class="p">&gt;</i>Impact from reduced foot traffic<i class="p">&lt;/</i><i class="t">td</i><i class="p">&gt;</i>
    <i class="p">&lt;/</i><i class="t">tr</i><i class="p">&gt;</i>
    <i class="p">&lt;</i><i class="t">tr</i><i class="p">&gt;</i>
      <i class="p">&lt;</i><i class="t">td</i> <i class="a">style</i><i class="p">=</i><i class="p">"</i><i class="r">text-align</i><i class="p">:</i><i class="v"> left</i><i class="p">"</i><i class="p">&gt;</i>Customer Acquisition Cost (CAC)<i class="p">&lt;/</i><i class="t">td</i><i class="p">&gt;</i>
      <i class="p">&lt;</i><i class="t">td</i> <i class="a">style</i><i class="p">=</i><i class="p">"</i><i class="r">text-align</i><i class="p">:</i><i class="v"> left</i><i class="p">"</i><i class="p">&gt;</i>$120<i class="p">&lt;/</i><i class="t">td</i><i class="p">&gt;</i>
      <i class="p">&lt;</i><i class="t">td</i> <i class="a">style</i><i class="p">=</i><i class="p">"</i><i class="r">text-align</i><i class="p">:</i><i class="v"> left</i><i class="p">"</i><i class="p">&gt;</i>$110<i class="p">&lt;/</i><i class="t">td</i><i class="p">&gt;</i>
      <i class="p">&lt;</i><i class="t">td</i> <i class="a">style</i><i class="p">=</i><i class="p">"</i><i class="r">text-align</i><i class="p">:</i><i class="v"> left</i><i class="p">"</i><i class="p">&gt;</i>-$10<i class="p">&lt;/</i><i class="t">td</i><i class="p">&gt;</i>
      <i class="p">&lt;</i><i class="t">td</i> <i class="a">style</i><i class="p">=</i><i class="p">"</i><i class="r">text-align</i><i class="p">:</i><i class="v"> left</i><i class="p">"</i><i class="p">&gt;</i>On Target<i class="p">&lt;/</i><i class="t">td</i><i class="p">&gt;</i>
      <i class="p">&lt;</i><i class="t">td</i> <i class="a">style</i><i class="p">=</i><i class="p">"</i><i class="r">text-align</i><i class="p">:</i><i class="v"> left</i><i class="p">"</i><i class="p">&gt;</i>Efficient digital marketing campaigns<i class="p">&lt;/</i><i class="t">td</i><i class="p">&gt;</i>
    <i class="p">&lt;/</i><i class="t">tr</i><i class="p">&gt;</i></pre></div>
  <!-- v scrollbar -->
  <div class="abs" style="left:1522px;top:219px;width:14px;height:656px;background:#fafafa"></div>
  <svg class="abs" style="left:1524px;top:223px" width="10" height="8" viewBox="0 0 10 8"><path d="M1 6.5 L5 1 L9 6.5Z" fill="#898989" stroke="#898989" stroke-width="0.8" stroke-linejoin="round"/></svg>
  <div class="abs" style="left:1525px;top:236px;width:8px;height:202px;border-radius:4px;background:#898989"></div>
  <svg class="abs" style="left:1524px;top:864px" width="10" height="8" viewBox="0 0 10 8"><path d="M1 1.5 L5 7 L9 1.5Z" fill="#898989" stroke="#898989" stroke-width="0.8" stroke-linejoin="round"/></svg>
  <!-- h scrollbar -->
  <div class="abs" style="left:902px;top:875px;width:634px;height:14px;background:#fafafa"></div>
  <svg class="abs" style="left:905px;top:877px" width="8" height="10" viewBox="0 0 8 10"><path d="M6.5 1 L1 5 L6.5 9Z" fill="#898989" stroke="#898989" stroke-width="0.8" stroke-linejoin="round"/></svg>
  <div class="abs" style="left:919px;top:878px;width:461px;height:8px;border-radius:4px;background:#898989"></div>
  <svg class="abs" style="left:1511px;top:877px" width="8" height="10" viewBox="0 0 8 10"><path d="M1.5 1 L7 5 L1.5 9Z" fill="#898989" stroke="#898989" stroke-width="0.8" stroke-linejoin="round"/></svg>
  <!-- status -->
  <div class="abs" style="left:902px;top:888px;width:634px;height:28px;background:#f9fafb;border-top:1px solid #e5e7eb"></div>
  <div class="abs" style="left:917px;top:899px;width:5.5px;height:5.5px;border-radius:50%;background:#22c55e"></div>
  <div class="abs" style="left:928px;top:897px;font-size:9.8px;line-height:12px;color:#6b7280">10 rows</div>
  <div class="abs" style="left:978px;top:899px;width:1px;height:9px;background:#d1d5db"></div>
  <div class="abs" style="left:994px;top:897px;font-size:9.8px;line-height:12px;color:#6b7280">4.4 KB</div>
  <div class="abs" style="left:1409px;top:896px;font-size:9.5px;line-height:12px;color:#9ca3af;letter-spacing:0.3px">UTF-8</div>
  <div class="abs" style="left:1448px;top:895px;width:73px;height:15.5px;border-radius:4px;background:#e5e7eb"></div>
  <div class="abs" style="left:1448px;top:896.5px;width:73px;text-align:center;font-size:8px;font-weight:bold;line-height:11px;color:#4b5563">PREVIEW ONLY</div>
</div>
</body></html>
